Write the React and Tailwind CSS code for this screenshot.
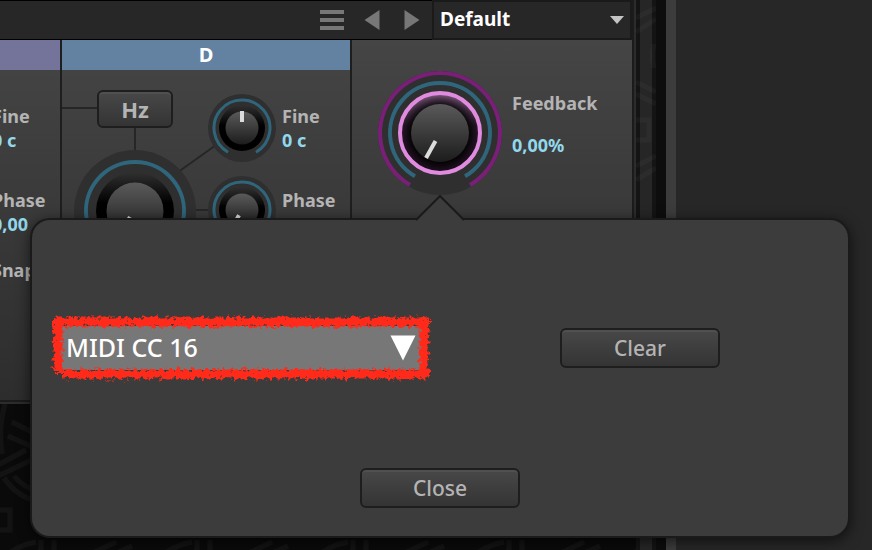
import React, { useState } from "react";

const arcPath = (c, r) => {
  const dx = r * 0.5;
  const dy = r * 0.866;
  return `M ${c - dx} ${c + dy} A ${r} ${r} 0 1 1 ${c + dx} ${c + dy}`;
};

const SmallKnob = ({ id, angle }) => (
  <svg width="68" height="68" viewBox="0 0 68 68" className="shrink-0">
    <defs>
      <linearGradient id={`${id}-face`} x1="0" y1="0" x2="0" y2="1">
        <stop offset="0" stopColor="#5a5a5a" />
        <stop offset="1" stopColor="#1c1c1c" />
      </linearGradient>
      <linearGradient id={`${id}-rim`} x1="0" y1="0" x2="0" y2="1">
        <stop offset="0" stopColor="#303030" />
        <stop offset="0.45" stopColor="#000" />
      </linearGradient>
    </defs>
    <circle cx="34" cy="34" r="34" fill="#2f2f2f" />
    <path d={arcPath(34, 28)} fill="none" stroke="#2f667c" strokeWidth="3" />
    <circle cx="34" cy="34" r="23" fill={`url(#${id}-rim)`} />
    <circle cx="34" cy="34" r="16.5" fill={`url(#${id}-face)`} />
    <line
      x1="34"
      y1="28"
      x2="34"
      y2="17"
      stroke="#dcdcdc"
      strokeWidth="4"
      transform={`rotate(${angle} 34 34)`}
    />
  </svg>
);

const BigKnob = () => (
  <svg width="122" height="122" viewBox="0 0 122 122" className="shrink-0">
    <defs>
      <linearGradient id="big-face" x1="0" y1="0" x2="0" y2="1">
        <stop offset="0" stopColor="#5a5a5a" />
        <stop offset="1" stopColor="#1c1c1c" />
      </linearGradient>
      <linearGradient id="big-rim" x1="0" y1="0" x2="0" y2="1">
        <stop offset="0" stopColor="#303030" />
        <stop offset="0.4" stopColor="#000" />
      </linearGradient>
    </defs>
    <circle cx="61" cy="61" r="61" fill="#2f2f2f" />
    <path d={arcPath(61, 49)} fill="none" stroke="#2f667c" strokeWidth="4" />
    <circle cx="61" cy="61" r="39" fill="url(#big-rim)" />
    <circle cx="61" cy="61" r="28.5" fill="url(#big-face)" />
    <line x1="56" y1="67" x2="47" y2="83" stroke="#dcdcdc" strokeWidth="4" />
  </svg>
);

const FeedbackKnob = () => (
  <svg width="128" height="128" viewBox="0 0 128 128" className="shrink-0">
    <defs>
      <linearGradient id="fb-face" x1="0" y1="0" x2="0" y2="1">
        <stop offset="0" stopColor="#5a5a5a" />
        <stop offset="1" stopColor="#1c1c1c" />
      </linearGradient>
      <linearGradient id="fb-rim" x1="0" y1="0" x2="0" y2="1">
        <stop offset="0" stopColor="#7a557a" />
        <stop offset="0.4" stopColor="#2a1a2a" />
        <stop offset="1" stopColor="#241224" />
      </linearGradient>
      <radialGradient id="fb-shade">
        <stop offset="0.72" stopColor="#000" stopOpacity="0.9" />
        <stop offset="1" stopColor="#000" stopOpacity="0" />
      </radialGradient>
    </defs>
    <circle cx="64" cy="64" r="62" fill="#2f2f2f" />
    <path d={arcPath(64, 60)} fill="none" stroke="#7a1f78" strokeWidth="4" />
    <path d={arcPath(64, 50)} fill="none" stroke="#2f667c" strokeWidth="4" />
    <circle cx="64" cy="64" r="39" fill="url(#fb-rim)" />
    <circle cx="64" cy="65" r="39" fill="url(#fb-shade)" />
    <circle cx="64" cy="64" r="40" fill="none" stroke="#e08be0" strokeWidth="4" />
    <circle cx="64" cy="64" r="29" fill="url(#fb-face)" />
    <line x1="59.5" y1="72" x2="50" y2="89" stroke="#dcdcdc" strokeWidth="4" />
  </svg>
);

const Param = ({ label, value }) => (
  <div className="flex flex-col leading-6 whitespace-nowrap">
    <span className="text-[#b4b4b4]">{label}</span>
    <span className="text-[#93d8ec]">{value}</span>
  </div>
);

const PushButton = ({ children, className, onClick }) => (
  <button
    type="button"
    onClick={onClick}
    className={`rounded-md border-2 border-[#1e1e1e] bg-linear-to-b from-[#484848] to-[#343434] text-[#b4b4b4] shadow-[inset_0_2px_0_#505050] ${className}`}
  >
    {children}
  </button>
);

const Tile = ({ id }) => (
  <pattern id={id} width="156" height="156" patternUnits="userSpaceOnUse">
    <g fill="none" stroke="#ffffff" strokeOpacity="0.035" strokeWidth="5">
      <path d="M-4 62 L26 46 M-4 73 L36 54 M8 32 L44 48 M12 18 L44 34" />
      <path d="M4 74 Q18 94 40 98 M14 72 Q24 84 40 88" />
      <path d="M5 0 Q-2 24 2 50" />
      <rect x="-14" y="106" width="24" height="20" />
      <path d="M2 156 Q14 142 36 138 M12 160 Q24 150 40 148" />
      <path d="M41 136 V156 M54 136 V156 M78 156 L116 138 M92 160 L132 142" />
      <path d="M112 20 A34 34 0 0 0 150 60 M122 16 A26 26 0 0 0 152 46" />
    </g>
  </pattern>
);

const Header = () => (
  <header className="flex h-10 items-center justify-end border-t border-b border-black bg-[#272727]">
    <button type="button" aria-label="Menu" className="mr-5">
      <svg width="24" height="20" viewBox="0 0 24 20" fill="#777">
        <path d="M0 0h24v4H0zM0 8h24v4H0zM0 16h24v4H0z" />
      </svg>
    </button>
    <button type="button" aria-label="Previous preset" className="mr-6">
      <svg width="16" height="20" viewBox="0 0 16 20" fill="#777">
        <path d="M15.500 0v20L0.500 10z" />
      </svg>
    </button>
    <button type="button" aria-label="Next preset" className="mr-3">
      <svg width="16" height="20" viewBox="0 0 16 20" fill="#777">
        <path d="M0.500 0v20L15.500 10z" />
      </svg>
    </button>
    <div className="relative flex h-10 w-50 items-center border-2 border-[#1a1a1a] bg-[#272727]">
      <select
        aria-label="Preset"
        className="h-full w-full appearance-none pl-1.5 text-[19px] font-bold text-white outline-none"
      >
        <option>Default</option>
      </select>
      <svg
        width="14"
        height="8"
        viewBox="0 0 14 8"
        className="pointer-events-none absolute right-1.5"
      >
        <path d="M0 0h14L7 8z" fill="#c4c4c4" />
      </svg>
    </div>
  </header>
);

const OperatorC = () => (
  <section className="flex w-15.5 shrink-0 flex-col overflow-hidden border-r-2 border-[#1e1e1e]">
    <div className="h-7.5 bg-[#74749a]" />
    <div className="flex justify-end pt-8.5">
      <div className="flex w-17 shrink-0 flex-col gap-9">
        <Param label="Fine" value="0 c" />
        <Param label="Phase" value="0,00" />
      </div>
    </div>
    <div className="flex justify-end pt-5.5 leading-6">
      <span className="w-17 shrink-0 text-[#b4b4b4]">Snap</span>
    </div>
  </section>
);

const OperatorD = () => (
  <section className="flex w-72.5 shrink-0 flex-col border-r-2 border-[#1e1e1e]">
    <h2 className="flex h-7.5 items-center justify-center bg-[#6382a2] text-xl font-bold text-white">
      D
    </h2>
    <div className="relative flex gap-3 pl-3">
      <svg
        width="160"
        height="150"
        viewBox="0 0 160 150"
        className="absolute top-0 left-0"
      >
        <path
          d="M0 38H36M73 56V82M112 105L154 75M130 140H150"
          stroke="#262626"
          strokeWidth="2"
          fill="none"
        />
      </svg>
      <div className="relative flex flex-col items-center gap-5.5 pt-5">
        <PushButton className="h-9.5 w-19 text-[22px] leading-6 font-bold">
          Hz
        </PushButton>
        <BigKnob />
      </div>
      <div className="relative flex flex-col gap-3.5 pt-6">
        <div className="flex gap-1.5">
          <SmallKnob id="fine" angle={0} />
          <div className="pt-2.5">
            <Param label="Fine" value="0 c" />
          </div>
        </div>
        <div className="flex gap-1.5">
          <SmallKnob id="phase" angle={210} />
          <div className="pt-3">
            <Param label="Phase" value="0,00" />
          </div>
        </div>
      </div>
    </div>
  </section>
);

const FeedbackPanel = () => (
  <section className="flex flex-1 gap-2 pt-[29px] pl-6">
    <FeedbackKnob />
    <div className="flex flex-col gap-4.5 pt-5.5 leading-6">
      <span className="text-[#b4b4b4]">Feedback</span>
      <span className="text-[#93d8ec]">0,00%</span>
    </div>
  </section>
);

const MarkerFrame = () => (
  <svg
    viewBox="0 0 380 64"
    preserveAspectRatio="none"
    className="pointer-events-none absolute inset-0 h-full w-full overflow-visible"
  >
    <defs>
      <filter
        id="rough"
        filterUnits="userSpaceOnUse"
        x="-10"
        y="-10"
        width="400"
        height="84"
        colorInterpolationFilters="sRGB"
      >
        <feTurbulence
          type="fractalNoise"
          baseFrequency="0.28"
          numOctaves="3"
          seed="7"
          result="noise"
        />
        <feDisplacementMap
          in="SourceGraphic"
          in2="noise"
          scale="10"
          xChannelSelector="R"
          yChannelSelector="G"
        />
      </filter>
    </defs>
    <path
      d="M1 6H378M6 2V57M372 2V62M10 58H377"
      fill="none"
      stroke="#ff2a1a"
      strokeWidth="9"
      filter="url(#rough)"
    />
  </svg>
);

const MidiPopover = ({ onClose }) => {
  const [source, setSource] = useState("MIDI CC 16");

  return (
    <div
      role="dialog"
      aria-label="MIDI assignment"
      className="absolute top-55 right-6 left-8 rounded-[18px] bg-[#3c3c3c] px-5 pt-24 pb-7 shadow-[0_0_0_2px_#1a1a1a,0_3px_14px_2px_rgba(0,0,0,0.6)]"
    >
      <svg
        width="50"
        height="27"
        viewBox="0 0 50 27"
        className="absolute bottom-full left-1/2 -mb-0.5 -translate-x-1/2"
      >
        <path d="M1 26L25 2L49 26V27H1z" fill="#3c3c3c" />
        <path d="M1 25L25 1L49 25" fill="none" stroke="#1a1a1a" strokeWidth="2" />
      </svg>

      <div className="flex items-center justify-between pr-27">
        <div className="relative flex h-16 w-95 items-center pr-2 pl-1.5">
          <select
            aria-label="Controller"
            value={source}
            onChange={(e) => setSource(e.target.value)}
            className="h-11 w-full appearance-none bg-[#777] pb-0.5 pl-2 text-[25px] leading-8 font-medium text-white outline-none"
          >
            <option>MIDI CC 16</option>
            <option value="">None</option>
          </select>
          <svg
            width="26"
            height="26"
            viewBox="0 0 26 26"
            className="pointer-events-none absolute right-4"
          >
            <path d="M0.500 0.500h25L13 25.500z" fill="#fff" />
          </svg>
          <MarkerFrame />
        </div>
        <PushButton
          onClick={() => setSource("")}
          className="h-10 w-40 text-[21px] leading-6 font-medium"
        >
          Clear
        </PushButton>
      </div>

      <div className="mt-22 flex justify-center">
        <PushButton
          onClick={onClose}
          className="h-10 w-40 text-[21px] leading-6 font-medium"
        >
          Close
        </PushButton>
      </div>
    </div>
  );
};

export default function App() {
  const [open, setOpen] = useState(true);

  return (
    <div className="relative flex min-h-screen overflow-hidden bg-[#272727] font-['Noto_Sans','Open_Sans',sans-serif] text-lg font-bold">
      <main className="flex w-159 shrink-0 flex-col bg-[#0a0a0a]">
        <div className="border-r-2 border-b-2 border-[#2c2c2c]">
          <div className="border-r-2 border-b-2 border-[#1b1b1b]">
            <Header />
            <div className="flex h-90 bg-linear-to-b from-[#454545] to-[#2d2d2d]">
              <OperatorC />
              <OperatorD />
              <FeedbackPanel />
            </div>
          </div>
        </div>
        <svg className="w-full flex-1">
          <defs>
            <Tile id="tile-bottom" />
          </defs>
          <rect width="100%" height="100%" fill="url(#tile-bottom)" />
        </svg>
      </main>

      <div className="flex w-5 shrink-0 border-x-4 border-[#141414] bg-[#262626]">
        <svg className="h-full w-full overflow-visible">
          <path
            d="M-4 18L16 8M-4 32L16 19M-4 82L16 92M-4 94L16 104M-4 120H9V140H-4M-4 166L16 156M-4 180L16 168M14 44Q11 56 14 68"
            fill="none"
            stroke="#fff"
            strokeOpacity="0.03"
            strokeWidth="5"
          />
        </svg>
      </div>
      <div className="w-2.5 shrink-0 bg-[#0d0d0d]" />
      <div className="w-2.5 shrink-0 bg-[#3c3c3c]" />

      {open && <MidiPopover onClose={() => setOpen(false)} />}
    </div>
  );
}
